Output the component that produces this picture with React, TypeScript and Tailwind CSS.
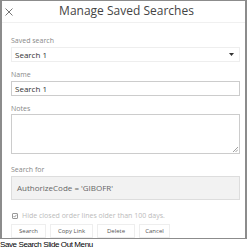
export default function App() {
    return (
        <div className="w-[247px] h-[252px] bg-white overflow-hidden" style={{ fontFamily: '"Open Sans", sans-serif' }}>
            <div className="w-[247px] h-[239px] border-t border-b border-l-2 border-r-2 border-[#8c8c8c] flex flex-col">
                <div className="h-[24px] flex items-center border-b border-[#f0f0f0] relative">
                    <svg className="absolute left-[3px] top-[7px]" width="8" height="8" viewBox="0 0 8 8">
                        <path d="M0.5 0.5 L7.5 7.5 M7.5 0.5 L0.5 7.5" stroke="#666" strokeWidth="0.9" />
                    </svg>
                    <div className="w-full text-center text-[12px] leading-none text-[#444] pl-[6px] pb-[1px]">Manage Saved Searches</div>
                </div>
                <div className="pl-[9px] pr-[5px] flex flex-col">
                    <div className="mt-[13px] text-[7px] leading-[9px] text-[#888]">Saved search</div>
                    <div className="mt-[2px] h-[15px] border border-[#eeeeee] flex items-center justify-between pl-[3px] pr-[5px]">
                        <span className="text-[8px] text-[#333]">Search 1</span>
                        <svg width="5" height="3" viewBox="0 0 5 3"><path d="M0 0 L5 0 L2.5 3 Z" fill="#333" /></svg>
                    </div>
                    <div className="mt-[8px] text-[7px] leading-[9px] text-[#888]">Name</div>
                    <div className="mt-[2px] h-[15px] border border-[#cccccc] flex items-center pl-[3px]">
                        <span className="text-[8px] text-[#333]">Search 1</span>
                    </div>
                    <div className="mt-[8px] text-[7px] leading-[9px] text-[#888]">Notes</div>
                    <div className="mt-[1px] h-[40px] border border-[#cccccc] relative">
                        <svg className="absolute right-[1px] bottom-[1px]" width="5" height="5" viewBox="0 0 5 5">
                            <path d="M5 0 L0 5 M5 2.5 L2.5 5" stroke="#888" strokeWidth="0.8" />
                        </svg>
                    </div>
                    <div className="mt-[11px] text-[7px] leading-[9px] text-[#888]">Search for</div>
                    <div className="mt-[2px] h-[24px] border border-[#dddddd] bg-[#f2f2f2] flex items-center pl-[5px]">
                        <span className="text-[8px] text-[#666]">AuthorizeCode = 'GIBOFR'</span>
                    </div>
                    <div className="mt-[12px] flex items-center gap-[4px] pl-[1px]">
                        <div className="w-[6px] h-[6px] border border-[#999] rounded-[1px] flex items-center justify-center">
                            <svg width="4" height="4" viewBox="0 0 4 4"><path d="M0.5 2 L1.6 3.1 L3.5 0.8" stroke="#777" strokeWidth="0.7" fill="none" /></svg>
                        </div>
                        <span className="text-[7px] leading-none text-[#bbb]">Hide closed order lines older than 100 days.</span>
                    </div>
                    <div className="mt-[5px] flex gap-[4px]">
                        <div className="w-[35px] h-[14px] border border-[#eeeeee] flex items-center justify-center text-[6px] text-[#555]">Search</div>
                        <div className="w-[43px] h-[14px] border border-[#eeeeee] flex items-center justify-center text-[6px] text-[#555]">Copy Link</div>
                        <div className="w-[38px] h-[14px] border border-[#eeeeee] flex items-center justify-center text-[6px] text-[#555]">Delete</div>
                        <div className="w-[31px] h-[14px] border border-[#eeeeee] flex items-center justify-center text-[6px] text-[#555]">Cancel</div>
                    </div>
                </div>
            </div>
            <div className="text-[8px] leading-[12px] tracking-[-0.4px] text-black" style={{ fontFamily: '"Liberation Sans", Arial, sans-serif' }}>Save Search Slide Out Menu</div>
        </div>
    );
}
